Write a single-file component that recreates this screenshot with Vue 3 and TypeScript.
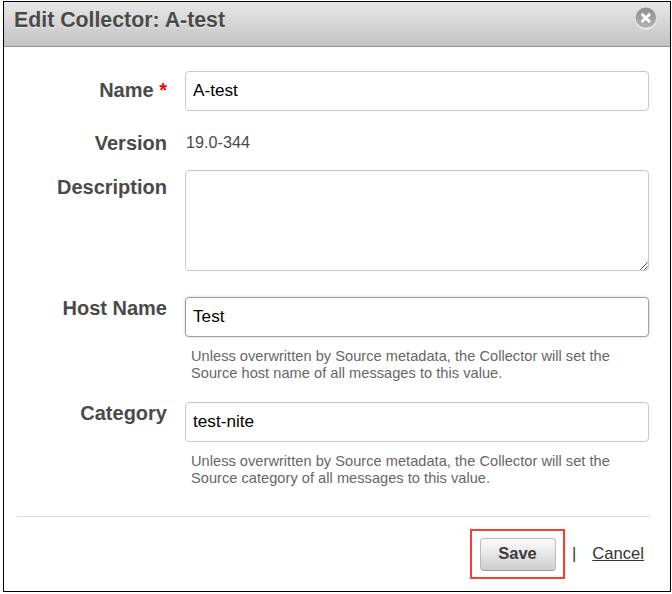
<script setup lang="ts">
import { ref } from 'vue'

const name = ref('A-test')
const version = '19.0-344'
const description = ref('')
const hostName = ref('Test')
const category = ref('test-nite')
</script>

<template>
  <main class="page">
    <section class="dialog">
      <header class="bar">
        <h1 class="title">Edit Collector: A-test</h1>
        <button class="close" type="button" aria-label="Close">
          <svg width="24" height="24" viewBox="0 0 24 24">
            <defs>
              <linearGradient id="disc" x1="0" y1="0" x2="0" y2="1">
                <stop offset="0" stop-color="#909090" />
                <stop offset="1" stop-color="#b2b2b2" />
              </linearGradient>
            </defs>
            <circle cx="11.8" cy="12.8" r="10.8" fill="#eee" />
            <circle cx="11.8" cy="11.8" r="10.3" fill="url(#disc)" />
            <path d="M8.5 8.7L15.1 15.3M15.1 8.7L8.5 15.3" stroke="#fff" stroke-width="3" stroke-linecap="round" />
          </svg>
        </button>
      </header>

      <form class="form" @submit.prevent>
        <div class="row name-row">
          <label class="label" for="name">Name <span class="required">*</span></label>
          <input id="name" v-model="name" class="field" type="text" />
        </div>
        <div class="row version-row">
          <span class="label">Version</span>
          <span class="value">{{ version }}</span>
        </div>
        <div class="row description-row">
          <label class="label" for="description">Description</label>
          <div class="area-wrap">
            <textarea id="description" v-model="description" class="field area"></textarea>
            <svg class="grip" width="8" height="8" viewBox="0 0 8 8">
              <path d="M0.3 7.7L7.7 0.3M4.3 7.7L7.7 4.3" stroke="#555" stroke-width="1" />
            </svg>
          </div>
        </div>
        <div class="row host-row">
          <label class="label raised" for="host">Host Name</label>
          <div>
            <input id="host" v-model="hostName" class="field active" type="text" />
            <p class="help">Unless overwritten by Source metadata, the Collector will set the<br />Source host name of all messages to this value.</p>
          </div>
        </div>
        <div class="row category-row">
          <label class="label raised" for="category">Category</label>
          <div>
            <input id="category" v-model="category" class="field" type="text" />
            <p class="help">Unless overwritten by Source metadata, the Collector will set the<br />Source category of all messages to this value.</p>
          </div>
        </div>
      </form>

      <footer class="actions">
        <div class="highlight">
          <button class="save" type="button">Save</button>
        </div>
        <span class="divider">|</span>
        <a class="cancel" href="#">Cancel</a>
      </footer>
    </section>
  </main>
</template>

<style>
body {
  background: #fff;
}
</style>

<style scoped>
.page {
  box-sizing: border-box;
  width: 672px;
  height: 594px;
  padding: 1px 1px 2px 3px;
}
.dialog {
  box-sizing: border-box;
  display: flex;
  flex-direction: column;
  width: 668px;
  height: 591px;
  border: 1px solid #000;
  background: #fff;
  color: #4a4a4a;
  font-family: "Liberation Sans", Arial, sans-serif;
}
.bar {
  box-sizing: border-box;
  display: flex;
  justify-content: space-between;
  align-items: flex-start;
  height: 45px;
  flex: none;
  padding: 4px 12px 0 10px;
  border-bottom: 1px solid #929292;
  background: linear-gradient(#e7e7e7, #c3c3c3);
}
.title {
  margin: 0;
  font-size: 21.3px;
  line-height: 28px;
  text-shadow: 0 1px 0 #eee;
}
.close {
  display: block;
  width: 24px;
  height: 24px;
  padding: 0;
  border: 0;
  background: none;
}
.close svg {
  display: block;
}
.form {
  display: flex;
  flex-direction: column;
  padding: 24px 21px 0 13px;
}
.row {
  display: grid;
  grid-template-columns: 150px 464px;
  column-gap: 18px;
  align-items: start;
}
.label {
  font-size: 20px;
  font-weight: bold;
  line-height: 24px;
  text-align: right;
}
.raised {
  line-height: 22px;
}
.required {
  color: #f00;
}
.name-row {
  height: 60px;
}
.name-row .label {
  padding-top: 7px;
}
.version-row {
  height: 39px;
}
.value {
  padding-left: 1px;
  font-size: 16.2px;
  line-height: 22px;
}
.description-row {
  height: 127px;
}
.description-row .label {
  padding-top: 5px;
}
.host-row {
  height: 105px;
}
.field {
  box-sizing: border-box;
  display: block;
  width: 464px;
  height: 40px;
  margin: 0;
  padding: 0 7px 2px;
  border: 1px solid #c8c8c8;
  border-radius: 4px;
  outline: none;
  background: #fff;
  color: #000;
  font: 17.2px "Liberation Sans", Arial, sans-serif;
}
.active {
  border-color: #a0a0a0;
  box-shadow: 0 0 3px #ccc;
}
.area-wrap {
  position: relative;
}
.area {
  height: 101px;
  resize: none;
}
.grip {
  position: absolute;
  right: 1px;
  bottom: 1px;
}
.help {
  margin: 11px 0 0 6px;
  font-size: 14.6px;
  letter-spacing: 0.03px;
  line-height: 17px;
  color: #666;
  white-space: nowrap;
}
.actions {
  display: flex;
  align-items: center;
  justify-content: flex-end;
  margin: auto 20px 0 13px;
  height: 75px;
  border-top: 1px solid #ddd;
  padding: 0 6px 1px 0;
  box-sizing: border-box;
  font-size: 16.6px;
  color: #333;
}
.highlight {
  box-sizing: border-box;
  display: flex;
  align-items: center;
  justify-content: center;
  width: 95px;
  height: 50px;
  padding-top: 1px;
  border: 2px solid #fb3a33;
}
.save {
  box-sizing: border-box;
  width: 76px;
  height: 33px;
  padding: 0 0 2px;
  border: 1px solid #bbb;
  border-bottom-color: #999;
  border-radius: 4px;
  background: linear-gradient(#fdfdfd, #cdcdcd);
  color: #3d3d3d;
  font: bold 16.5px "Liberation Sans", Arial, sans-serif;
}
.divider {
  margin: 0 16px 0 7px;
}
.cancel {
  color: #333;
  text-decoration: underline;
}
</style>
